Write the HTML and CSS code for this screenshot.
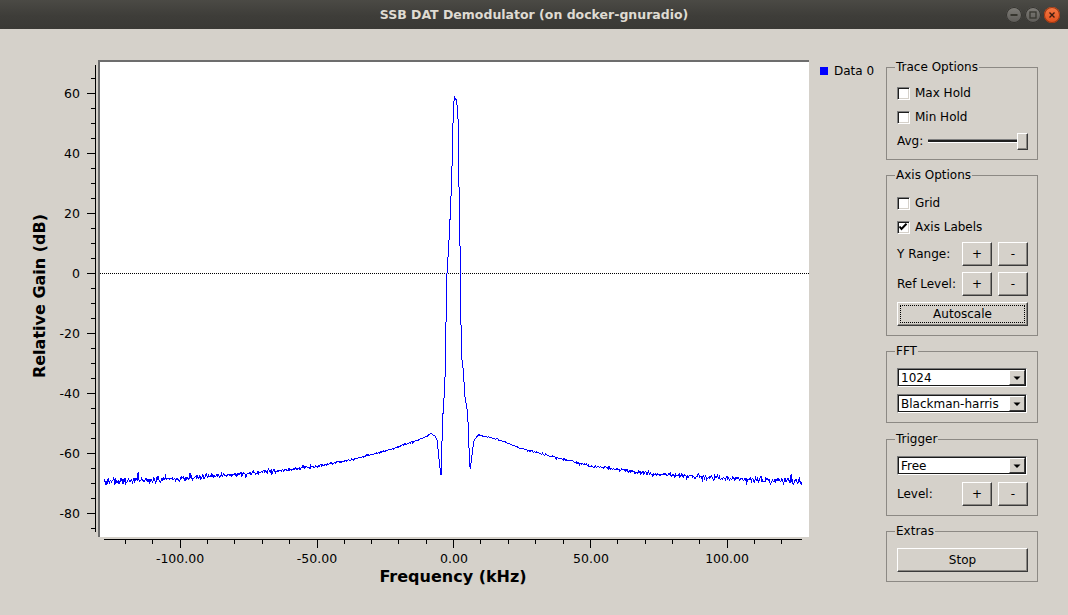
FILE: index.html
```html
<!DOCTYPE html>
<html>
<head>
<meta charset="utf-8">
<title>SSB DAT Demodulator</title>
<link rel="stylesheet" href="styles.css">
</head>
<body>
<div class="window">
  <header class="titlebar">
    <div></div>
    <div class="title">SSB DAT Demodulator (on docker-gnuradio)</div>
    <div class="wbtns">
      <span class="wbtn min"><svg width="16" height="16" viewBox="0 0 16 16"><rect x="4.5" y="7" width="7" height="2" fill="#37362f"/></svg></span>
      <span class="wbtn max"><svg width="16" height="16" viewBox="0 0 16 16"><rect x="5" y="5" width="6" height="6" fill="none" stroke="#37362f" stroke-width="1.3"/></svg></span>
      <span class="wbtn close"><svg width="16" height="16" viewBox="0 0 16 16"><path d="M5.5 5.5L10.5 10.5M10.5 5.5L5.5 10.5" stroke="#3b1c10" stroke-width="1.4"/></svg></span>
    </div>
  </header>
  <main class="main">
    <div class="plot">
      <svg width="810" height="586" viewBox="0 0 810 586">
        <g transform="translate(0,-29)">
          <rect x="98" y="60" width="711" height="477" fill="#ffffff"/>
          <rect x="98" y="60" width="711" height="2" fill="#6d6d6d"/>
          <rect x="98" y="60" width="2" height="477" fill="#6d6d6d"/>
          <line x1="100" y1="273.5" x2="809" y2="273.5" stroke="#000" stroke-dasharray="1 1"/>
          <path id="curve" d="" fill="none" stroke="#0000ff" stroke-width="1" shape-rendering="crispEdges"/>
          <g stroke="#000" stroke-width="1" shape-rendering="crispEdges">
            <line x1="95.5" y1="65" x2="95.5" y2="532"/>
            <path d="M87 93.5H96M87 153.5H96M87 213.5H96M87 273.5H96M87 333.5H96M87 393.5H96M87 453.5H96M87 513.5H96"/>
            <path d="M91 78.5H96M91 108.5H96M91 123.5H96M91 138.5H96M91 168.5H96M91 183.5H96M91 198.5H96M91 228.5H96M91 243.5H96M91 258.5H96M91 288.5H96M91 303.5H96M91 318.5H96M91 348.5H96M91 363.5H96M91 378.5H96M91 408.5H96M91 423.5H96M91 438.5H96M91 468.5H96M91 483.5H96M91 498.5H96M91 528.5H96"/>
            <line x1="104" y1="539.5" x2="802" y2="539.5"/>
            <path d="M180.5 540V548M317.5 540V548M453.5 540V548M590.5 540V548M727.5 540V548"/>
            <path d="M125.5 540V544M152.5 540V544M207.5 540V544M234.5 540V544M262.5 540V544M289.5 540V544M344.5 540V544M371.5 540V544M398.5 540V544M426.5 540V544M480.5 540V544M508.5 540V544M535.5 540V544M563.5 540V544M617.5 540V544M645.5 540V544M672.5 540V544M699.5 540V544M754.5 540V544M781.5 540V544"/>
          </g>
          <g class="ticklbl" text-anchor="end">
            <text x="80" y="97.5">60</text>
            <text x="80" y="157.5">40</text>
            <text x="80" y="217.5">20</text>
            <text x="80" y="277.5">0</text>
            <text x="80" y="337.5">-20</text>
            <text x="80" y="397.5">-40</text>
            <text x="80" y="457.5">-60</text>
            <text x="80" y="517.5">-80</text>
          </g>
          <g class="ticklbl" text-anchor="middle">
            <text x="180" y="563">-100.00</text>
            <text x="317" y="563">-50.00</text>
            <text x="454" y="563">0.00</text>
            <text x="591" y="563">50.00</text>
            <text x="727" y="563">100.00</text>
          </g>
          <text class="axtitle" x="453" y="582" text-anchor="middle">Frequency (kHz)</text>
          <text class="axtitle" transform="translate(44.5,296) rotate(-90)" text-anchor="middle">Relative Gain (dB)</text>
        </g>
      </svg>
    </div>
    <div class="legend">
      <div class="legend-item"><span class="swatch"></span><span>Data 0</span></div>
    </div>
    <div class="side">
      <fieldset class="group trace">
        <legend>Trace Options</legend>
        <label class="cbrow"><span class="cb"></span>Max Hold</label>
        <label class="cbrow"><span class="cb"></span>Min Hold</label>
        <div class="sliderrow"><span>Avg:</span><span class="groove"></span><span class="handle"></span></div>
      </fieldset>
      <fieldset class="group axis">
        <legend>Axis Options</legend>
        <label class="cbrow"><span class="cb"></span>Grid</label>
        <label class="cbrow"><span class="cb"><svg width="11" height="11" viewBox="0 0 11 11"><path d="M1.5 4.5L3.5 7L8.5 1.8" fill="none" stroke="#000" stroke-width="2"/></svg></span>Axis Labels</label>
        <div class="btnrow"><span class="lbl">Y Range:</span><button class="btn sm">+</button><button class="btn sm">-</button></div>
        <div class="btnrow"><span class="lbl">Ref Level:</span><button class="btn sm">+</button><button class="btn sm">-</button></div>
        <button class="btn wide focus">Autoscale</button>
      </fieldset>
      <fieldset class="group fft">
        <legend>FFT</legend>
        <div class="combo"><span class="ctext">1024</span><span class="carrow"><svg width="14" height="14" viewBox="0 0 14 14"><path d="M3.5 5.5H10.5L7 9Z" fill="#000"/></svg></span></div>
        <div class="combo"><span class="ctext">Blackman-harris</span><span class="carrow"><svg width="14" height="14" viewBox="0 0 14 14"><path d="M3.5 5.5H10.5L7 9Z" fill="#000"/></svg></span></div>
      </fieldset>
      <fieldset class="group trigger">
        <legend>Trigger</legend>
        <div class="combo"><span class="ctext">Free</span><span class="carrow"><svg width="14" height="14" viewBox="0 0 14 14"><path d="M3.5 5.5H10.5L7 9Z" fill="#000"/></svg></span></div>
        <div class="btnrow"><span class="lbl">Level:</span><button class="btn sm">+</button><button class="btn sm">-</button></div>
      </fieldset>
      <fieldset class="group extras">
        <legend>Extras</legend>
        <button class="btn wide">Stop</button>
      </fieldset>
    </div>
  </main>
</div>
<script src="script.js"></script>
</body>
</html>
```

FILE: styles.css
```css
* { box-sizing: border-box; }
html, body { margin: 0; padding: 0; }
body {
  width: 1068px;
  height: 615px;
  overflow: hidden;
  background: #d5d1ca;
  font-family: "DejaVu Sans", "Liberation Sans", sans-serif;
  font-size: 12px;
  color: #000;
}

.titlebar {
  height: 29px;
  display: grid;
  grid-template-columns: 1fr auto 1fr;
  align-items: center;
  background: linear-gradient(#4b4a45, #3e3d39 55%, #3a3935);
}
.title {
  color: #dfdbd2;
  font-weight: bold;
  font-size: 12.5px;
  white-space: nowrap;
}
.wbtns {
  justify-self: end;
  display: flex;
  gap: 3px;
  padding-right: 8px;
}
.wbtn { width: 16px; height: 16px; border-radius: 50%; display: block; }
.wbtn svg { display: block; }
.wbtn.min, .wbtn.max {
  background: linear-gradient(#7f7d78, #5c5a56);
  box-shadow: inset 0 0 0 1px #34332f;
}
.wbtn.close {
  background: linear-gradient(#f57a45, #e2511d);
  box-shadow: inset 0 0 0 1px #9c3813;
}

.main { display: flex; height: 586px; }
.plot { width: 810px; flex: none; }
.plot svg { display: block; }
.ticklbl text { font-family: "DejaVu Sans", sans-serif; font-size: 12.5px; fill: #000; }
.axtitle { font-family: "DejaVu Sans", sans-serif; font-size: 16px; font-weight: bold; fill: #000; }

.legend { width: 76px; flex: none; padding: 35px 0 0 10px; }
.legend-item { display: flex; align-items: center; gap: 6px; height: 14px; line-height: 14px; }
.swatch { width: 8px; height: 8px; background: #0000ff; flex: none; }

.side {
  width: 152px;
  flex: none;
  padding-top: 31px;
  display: flex;
  flex-direction: column;
  gap: 8px;
}
.group {
  margin: 0;
  min-width: 0;
  border: 1px solid #8c8984;
  padding: 10px 9px 9px 10px;
  display: flex;
  flex-direction: column;
  gap: 6px;
}
.group legend {
  font-size: 12px;
  line-height: 14px;
  padding: 0 1px;
  margin-left: -2px;
}
.group.axis { padding-top: 12px; }
.group.fft, .group.trigger { gap: 7px; }
.group.trigger { margin-top: 1px; }

.cbrow { height: 18px; display: flex; align-items: center; gap: 5px; }
.cb {
  width: 13px; height: 13px; flex: none;
  background: #fff;
  border: 1px solid;
  border-color: #808080 #ffffff #ffffff #808080;
  box-shadow: inset 1px 1px 0 #1e1e1e, inset -1px -1px 0 #d5d1ca;
  display: flex;
}
.cb svg { display: block; }

.sliderrow { height: 18px; display: flex; align-items: center; }
.groove {
  flex: 1;
  height: 4px;
  margin-left: 5px;
  background: #202020;
  border-top: 1px solid #808080;
  border-bottom: 1px solid #ffffff;
}
.handle {
  width: 11px; height: 17px; flex: none;
  background: #d5d1ca;
  border: 1px solid;
  border-color: #ffffff #3a3a3a #3a3a3a #ffffff;
  box-shadow: inset -1px -1px 0 #8a8782;
}

.btnrow { height: 24px; display: flex; align-items: center; gap: 6px; }
.btnrow .lbl { flex: 1; }
.btn {
  margin: 0;
  padding: 0;
  background: #d5d1ca;
  border: 1px solid;
  border-color: #ffffff #3a3a3a #3a3a3a #ffffff;
  box-shadow: inset -1px -1px 0 #8a8782;
  font-family: "DejaVu Sans", sans-serif;
  font-size: 12px;
  color: #000;
  height: 24px;
}
.btn.sm { width: 30px; flex: none; }
.btn.wide { width: 131px; }
.btn.focus { outline: 1px dotted #000; outline-offset: -4px; }

.combo {
  width: 130px;
  height: 19px;
  display: flex;
  align-items: center;
  background: #fff;
  border: 1px solid;
  border-color: #7a7a7a #ffffff #ffffff #7a7a7a;
  box-shadow: inset 1px 1px 0 #1a1a1a, inset -1px -1px 0 #1a1a1a;
  padding: 1px 1px 1px 3px;
}
.ctext { flex: 1; line-height: 13px; padding-top: 2px; }
.carrow {
  width: 16px; height: 15px; flex: none;
  background: #d5d1ca;
  border: 1px solid;
  border-color: #ffffff #3a3a3a #3a3a3a #ffffff;
  display: flex; align-items: center; justify-content: center;
}
.carrow svg { display: block; }
```

FILE: script.js
```js
(function () {
  var T = [[104,481],[140,480],[180,478.5],[250,473.5],[317,466.5],[350,460],[386,451],[400,446],[413,442],[425,437],[431,433.5],[435,436],[437,440],[439.5,463],[441,477],[442.7,417],[445,383],[446.7,280],[447.6,255],[448.3,262],[449,238],[450,220],[451.7,180],[453.3,110],[454.3,97],[455.5,99],[456.7,100],[458.3,123],[459.3,217],[460.7,273],[461,357],[462.7,363],[465,397],[467.7,413],[469,447],[470,472],[471.7,457],[474,440],[478.3,435],[483.3,436],[500,440],[520,448],[550,456],[591,466],[650,473.5],[727,478.5],[802,481]];
  function interp(x) {
    for (var i = 1; i < T.length; i++) {
      if (x <= T[i][0]) {
        var a = T[i - 1], b = T[i];
        var t = (x - a[0]) / (b[0] - a[0]);
        return a[1] + t * (b[1] - a[1]);
      }
    }
    return T[T.length - 1][1];
  }
  var s = 12345;
  function rnd() {
    s |= 0; s = s + 0x6D2B79F5 | 0;
    var t = Math.imul(s ^ s >>> 15, 1 | s);
    t = t + Math.imul(t ^ t >>> 7, 61 | t) ^ t;
    return ((t ^ t >>> 14) >>> 0) / 4294967296;
  }
  var N = 1024, x0 = 104, x1 = 802, d = '';
  for (var i = 0; i < N; i++) {
    var x = x0 + i * (x1 - x0) / (N - 1);
    var y = interp(x);
    var dist = Math.abs(x - 454);
    var amp = dist < 25 ? 0.2 : 0.45 + 2.1 * Math.pow(Math.min(1, (dist - 25) / 325), 1.3);
    var n = (rnd() + rnd() + rnd() - 1.5) * amp * 1.4;
    if (rnd() < 0.1) n += (rnd() - 0.5) * amp * 4.5;
    y += n;
    d += (i ? 'L' : 'M') + x.toFixed(2) + ' ' + y.toFixed(2);
  }
  document.getElementById('curve').setAttribute('d', d);
})();
```
